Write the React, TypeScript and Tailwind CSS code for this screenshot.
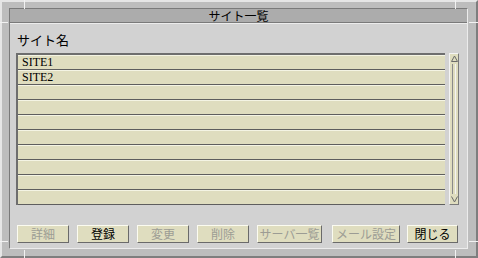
import React from "react";

const jp = "font-['Noto_Sans_CJK_JP','Noto_Sans',sans-serif]";

const buttons = [
  { label: "詳細", w: "w-[52px]", ml: "ml-0", disabled: true },
  { label: "登録", w: "w-[52px]", ml: "ml-[8px]", disabled: false },
  { label: "変更", w: "w-[52px]", ml: "ml-[8px]", disabled: true },
  { label: "削除", w: "w-[52px]", ml: "ml-[8px]", disabled: true },
  { label: "サーバ一覧", w: "w-[65px]", ml: "ml-[8px]", disabled: true },
  { label: "メール設定", w: "w-[68px]", ml: "ml-[10px]", disabled: true },
  { label: "閉じる", w: "w-[51px]", ml: "ml-[7px]", disabled: false },
];

const rows = ["SITE1", "SITE2", "", "", "", "", "", "", "", ""];

function ScrollArrow({ down }: { down?: boolean }) {
  return (
    <svg width="7" height="8" viewBox="0 0 7 8" className="block">
      {down ? (
        <path d="M0.5 1.5 L3.5 7 L6.5 1.5" fill="none" stroke="#6a6a6a" strokeWidth="1" />
      ) : (
        <path d="M0.5 6.5 L3.5 1 L6.5 6.5 Z" fill="none" stroke="#6a6a6a" strokeWidth="1" />
      )}
    </svg>
  );
}

export default function App() {
  return (
    <div className="relative w-[478px] h-[258px] bg-[#bdbdbd] border-t-2 border-l-2 border-[#e6e6e6] border-r-2 border-b-2 border-r-[#7e7e7e] border-b-[#7e7e7e] pt-[6px] pl-[7px] pr-[8px] pb-[7px]">
      {/* resize handle notches on the window frame */}
      <div className="absolute left-[22px] top-[-2px] h-[9px] w-px bg-[#f2f2f2]" />
      <div className="absolute right-[20px] top-[-2px] h-[9px] w-px bg-[#f2f2f2]" />
      <div className="absolute left-[22px] bottom-[-2px] h-[8px] w-px bg-[#f2f2f2]" />
      <div className="absolute right-[20px] bottom-[-2px] h-[8px] w-px bg-[#f2f2f2]" />
      <div className="absolute left-[-2px] top-[20px] w-[8px] h-px bg-[#f2f2f2]" />
      <div className="absolute right-[-2px] top-[20px] w-[9px] h-px bg-[#f2f2f2]" />
      <div className="absolute left-[-2px] bottom-[14px] w-[8px] h-px bg-[#f2f2f2]" />
      <div className="absolute right-[-2px] bottom-[14px] w-[9px] h-px bg-[#f2f2f2]" />

      <div className="flex flex-col w-full h-full border-t border-l border-[#7a7a7a] border-r border-b border-r-[#ececec] border-b-[#ececec]">
        <div className={`h-[14px] bg-[#acacac] border-b border-[#7a7a7a] flex items-center justify-center text-[12px] leading-none text-black ${jp}`}>
          サイト一覧
        </div>
        <div className="flex-1 bg-[#d2d2d2] border-t border-[#ececec] pl-[6px] pt-[8px]">
          <div className={`pl-px text-[13px] leading-[16px] text-black ${jp}`}>サイト名</div>
          <div className="mt-[5px] flex">
            <div className="w-[429px] h-[152px] border-t-2 border-l-2 border-[#6e6e6e] bg-[#dfddbf]">
              {rows.map((r, i) => (
                <div
                  key={i}
                  className="h-[15px] border-t border-[#f4f4e4] border-b border-b-[#5e5e5e] pl-[4px] text-[12px] leading-[13px] text-black font-['Liberation_Serif',serif]"
                >
                  {r}
                </div>
              ))}
            </div>
            <div className="ml-[4px] w-[10px] h-[152px] border border-[#f4f4f4] border-r-[#7a7a7a] border-b-[#7a7a7a] bg-[#dfddbf] flex flex-col items-center justify-between py-px">
              <ScrollArrow />
              <div className="flex-1 w-[4px] my-px border-l border-[#8a8a8a] border-r border-r-[#f4f4f4]" />
              <ScrollArrow down />
            </div>
          </div>
          <div className="mt-[20px] flex pl-px">
            {buttons.map((b) => (
              <div
                key={b.label}
                className={`${b.w} ${b.ml} h-[18px] bg-[#dfddbf] border border-[#fbfbf0] border-r-[#6a6a6a] border-b-[#6a6a6a] flex items-center justify-center text-[12px] leading-none ${jp} ${
                  b.disabled ? "text-[#9c9c94]" : "text-black"
                }`}
              >
                {b.label}
              </div>
            ))}
          </div>
        </div>
      </div>
    </div>
  );
}
